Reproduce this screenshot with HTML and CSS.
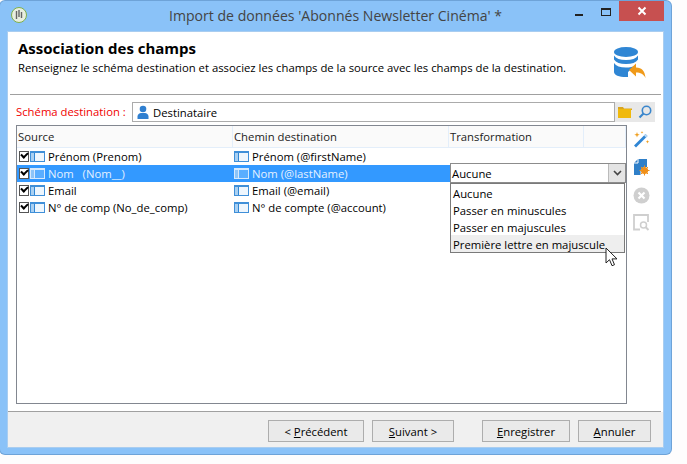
FILE: index.html

```html
<!DOCTYPE html>

<html>
    <head>
        <title>Import de données</title>
        <link rel="stylesheet" href="styles.css">
    </head>
    <body>
        <div class="window">
            <div class="titlebar">
                <svg class="app_icon" width="18" height="18" viewBox="0 0 18 18">
                    <circle cx="9" cy="9" r="7.500" fill="#e8eee0" stroke="#7fb04a" stroke-width="1"/>
                    <path d="M6.500 5v8M9 4v7M11.500 6v6" stroke="#666" stroke-width="1.400" fill="none"/>
                </svg>
                <div class="title_text">Import de données 'Abonnés Newsletter Cinéma' *</div>
                <div class="win_controls">
                    <div class="win_min"></div>
                    <div class="win_max"></div>
                    <div class="win_close">
                        <svg width="10" height="10" viewBox="0 0 10 10"><path d="M1.500 1.500l7 7M8.500 1.500l-7 7" stroke="#fff" stroke-width="2"/></svg>
                    </div>
                </div>
            </div>
            <div class="client">
                <div class="header">
                    <div class="header_text">
                        <h2>Association des champs</h2>
                        <p>Renseignez le schéma destination et associez les champs de la source avec les champs de la destination.</p>
                    </div>
                    <svg class="header_icon" width="34" height="34" viewBox="0 0 34 34">
                        <ellipse cx="13" cy="6" rx="12" ry="5" fill="#2f86d4"/>
                        <path d="M1 9.500c2 3 6 4.500 12 4.500s10-1.500 12-4.500v4c-2 3-6 4.500-12 4.500s-10-1.500-12-4.500z" fill="#2f86d4"/>
                        <path d="M1 17c2 3 6 4.500 12 4.500 4 0 7-.6 9-1.800l-7 6.300v5h-2c-7 0-12-2-12-5z" fill="#2f86d4"/>
                        <path d="M16 24l7-6.500v4c6 0 9 4 9.500 10.500-2-4-5-5.500-9.500-5.500v4z" fill="#f09a1a"/>
                    </svg>
                </div>
                <div class="body">
                    <div class="schema_row">
                        <label class="schema_label">Schéma destination :</label>
                        <div class="schema_input">
                            <svg class="user_icon" width="12" height="15" viewBox="0 0 12 15">
                                <circle cx="6" cy="4" r="3.300" fill="#2f7fd0"/>
                                <path d="M0.500 14v-2.500c0-2 2-3.500 3.500-3.500h4c1.500 0 3.500 1.500 3.500 3.500v2.500z" fill="#2f7fd0"/>
                            </svg>
                            <span>Destinataire</span>
                        </div>
                        <div class="schema_buttons">
                            <svg width="14" height="12" viewBox="0 0 14 12">
                                <path d="M0 1h5l1 1.500h8v1.500h-14z" fill="#d9a520"/>
                                <rect x="0" y="3" width="13" height="9" fill="#f0b90c"/>
                            </svg>
                            <svg width="14" height="14" viewBox="0 0 14 14">
                                <circle cx="8.500" cy="5.500" r="4.200" fill="none" stroke="#3a86cc" stroke-width="1.600"/>
                                <path d="M5.500 8.500l-4 4" stroke="#3a86cc" stroke-width="2.200"/>
                            </svg>
                        </div>
                    </div>
                    <div class="main_row">
                        <div class="grid">
                            <div class="grid_header">
                                <div class="head_cell">Source</div>
                                <div class="head_cell">Chemin destination</div>
                                <div class="head_cell">Transformation</div>
                                <div class="head_cell"></div>
                            </div>
                            <div class="grid_row">
                                <div class="cell"><span class="check"></span><span class="col_icon"></span>Prénom (Prenom)</div>
                                <div class="cell cell_dest"><span class="col_icon"></span>Prénom (@firstName)</div>
                            </div>
                            <div class="grid_row selected">
                                <div class="cell"><span class="check"></span><span class="col_icon"></span>Nom &nbsp; (Nom__)</div>
                                <div class="cell cell_dest"><span class="col_icon"></span>Nom (@lastName)</div>
                            </div>
                            <div class="grid_row">
                                <div class="cell"><span class="check"></span><span class="col_icon"></span>Email</div>
                                <div class="cell cell_dest"><span class="col_icon"></span>Email (@email)</div>
                            </div>
                            <div class="grid_row">
                                <div class="cell"><span class="check"></span><span class="col_icon"></span>N° de comp (No_de_comp)</div>
                                <div class="cell cell_dest"><span class="col_icon"></span>N° de compte (@account)</div>
                            </div>

                            <!-- open combo box, lies over the rows -->
                            <div class="combo">
                                <div class="combo_value">Aucune</div>
                                <div class="combo_arrow">
                                    <svg width="9" height="6" viewBox="0 0 9 6"><path d="M1 1l3.500 3.500L8 1" fill="none" stroke="#444" stroke-width="1.600"/></svg>
                                </div>
                            </div>
                            <div class="combo_list">
                                <div class="combo_item">Aucune</div>
                                <div class="combo_item">Passer en minuscules</div>
                                <div class="combo_item">Passer en majuscules</div>
                                <div class="combo_item combo_hover">Première lettre en majuscule</div>
                            </div>
                            <svg class="cursor" width="13" height="20" viewBox="0 0 13 20">
                                <path d="M1 1v15l3.500-3.300 2.500 6 2.500-1-2.500-5.800h5z" fill="#fff" stroke="#222" stroke-width="1"/>
                            </svg>
                        </div>
                        <div class="toolbar">
                            <svg width="17" height="17" viewBox="0 0 17 17">
                                <path d="M1 14.500L12.500 3l2 2L3 16.500z" fill="#2f86d4"/>
                                <path d="M11 4.500L12.500 3l2 2L13 6.500z" fill="#bcd9f2"/>
                                <path d="M4 1l.7 2 2 .7-2 .7-.7 2-.7-2-2-.7 2-.7zM14.500 9l.5 1.300 1.300.5-1.300.5-.5 1.300-.5-1.300-1.300-.5 1.300-.5zM9 0l.4 1 1 .4-1 .4-.4 1-.4-1-1-.4 1-.4z" fill="#f0a020"/>
                            </svg>
                            <svg width="17" height="17" viewBox="0 0 17 17">
                                <path d="M1 4l4-4h9v8h-3.500l-3 3v5h-6.500z" fill="#2f7fc8"/>
                                <path d="M5 0v4h-4" fill="none" stroke="#fff" stroke-width="1"/>
                                <circle cx="11.500" cy="11.500" r="3.600" fill="#f0901a"/>
                                <path d="M11.500 6.500v10M6.500 11.500h10M8 8l7 7M15 8l-7 7" stroke="#f0901a" stroke-width="1"/>
                            </svg>
                            <svg width="17" height="17" viewBox="0 0 17 17">
                                <circle cx="8.500" cy="8.500" r="8" fill="#cfcfcf"/>
                                <path d="M5.500 5.500l6 6M11.500 5.500l-6 6" stroke="#fff" stroke-width="2.200"/>
                            </svg>
                            <svg width="17" height="17" viewBox="0 0 17 17">
                                <path d="M7 15.500h-6v-14.500h14v7" fill="none" stroke="#cfcfcf" stroke-width="1.800"/>
                                <circle cx="10.500" cy="11" r="3" fill="none" stroke="#cfcfcf" stroke-width="1.500"/>
                                <path d="M12.500 13l3 3" stroke="#cfcfcf" stroke-width="2"/>
                            </svg>
                        </div>
                    </div>
                </div>
                <div class="footer">
                    <button class="btn btn_prev">&lt; <u>P</u>récédent</button>
                    <button class="btn btn_next"><u>S</u>uivant &gt;</button>
                    <button class="btn btn_save"><u>E</u>nregistrer</button>
                    <button class="btn btn_cancel"><u>A</u>nnuler</button>
                </div>
            </div>
        </div>
    </body>
</html>
```

FILE: styles.css

```css
html, body {
    margin: 0;      padding: 0;
    height: 100%;
    overflow: hidden;
    background-color: #fefdfd;
    color: #000;
    font-family: "Open Sans", sans-serif;
    font-size: 12px;
}

/* Window */
.window {
    box-sizing: border-box;
    width: 671px;   height: 453px;
    margin: 1px 0 0 0;
    padding: 0 8px 7px 8px;
    display: flex;
    flex-direction: column;
    background-color: #8ac2f8;
    border-radius: 5px;
    box-shadow: 0 0 0 1px #6ea3d8;
}

.titlebar {
    height: 31px;
    flex: none;
    display: flex;
    align-items: flex-start;
    position: relative;
}
.app_icon {
    margin: 5px 0 0 2px;
}
.title_text {
    position: absolute;
    left: 161px;    top: 5px;
    font-size: 14.08px;
    color: #444;
    white-space: nowrap;
}
.win_controls {
    margin-left: auto;
    margin-right: -1px;
    display: flex;
    align-items: flex-start;
}
.win_min {
    width: 8px;     height: 2px;
    margin: 13px 0 0 0;
    background-color: #222;
}
.win_max {
    width: 8px;     height: 5px;
    margin: 7px 8px 0 18px;
    border: solid 1px #222;
    border-top-width: 2px;
}
.win_close {
    width: 45px;    height: 20px;
    display: flex;
    align-items: center;
    justify-content: center;
    background-color: #c75050;
}

.client {
    flex: 1;
    display: flex;
    flex-direction: column;
    min-height: 0;
    background-color: #fff;
    box-shadow: 0 0 0 1px #a9cdf0;
}

/* Header */
.header {
    height: 62px;
    flex: none;
    margin: 0 2px;
    display: flex;
    justify-content: space-between;
    border-bottom: solid 1px #a0a0a0;
}
.header_text {
    padding: 6px 0 0 8px;
}
.header_text h2 {
    margin: 0;
    font-size: 15px;
    line-height: 20px;
    font-weight: bold;
}
.header_text p {
    margin: 2px 0 0 0;
    line-height: 16px;
    font-size: 11.3px;
}
.header_icon {
    margin: 14px 14px 0 0;
}

/* Body */
.body {
    flex: 1;
    min-height: 0;
    display: flex;
    flex-direction: column;
    padding: 7px 0 7px 8px;
    border-bottom: solid 1px #a0a0a0;
    margin: 0 2px 0 0;
}
.schema_row {
    height: 20px;
    flex: none;
    display: flex;
    align-items: stretch;
}
.schema_label {
    width: 116px;
    color: #f00000;
    line-height: 19px;
    white-space: nowrap;
    font-size: 11.3px;
}
.schema_input {
    flex: 1;
    box-sizing: border-box;
    display: flex;
    align-items: center;
    gap: 4px;
    padding-left: 4px;
    border: solid 1px #ababab;
    font-size: 11.3px;
}
.schema_buttons {
    width: 40px;
    margin-right: 6px;
    display: flex;
    align-items: center;
    justify-content: space-around;
    background-color: #e8e8e8;
}

.main_row {
    flex: 1;
    min-height: 0;
    margin-top: 3px;
    display: flex;
}

/* Grid */
.grid {
    box-sizing: border-box;
    width: 611px;
    position: relative;
    border: solid 1px #828790;
    font-size: 11.3px;
}
.grid_header {
    height: 21px;
    display: grid;
    grid-template-columns: 216px 216px 135px 1fr;
    background-color: #fafafa;
    border-bottom: solid 1px #e3eefa;
}
.head_cell {
    box-sizing: border-box;
    padding-left: 1px;
    line-height: 20px;
    padding-top: 1px;
    border-right: solid 1px #e3eefa;
    color: #222;
}
.grid_row {
    height: 17px;
    display: grid;
    grid-template-columns: 216px 216px;
    line-height: 17px;
}
.grid_row.selected {
    background-color: #3399ff;
    color: #e4f1ff;
}
.cell {
    display: flex;
    align-items: center;
    white-space: pre;
}
.cell_dest {
    padding-left: 1px;
}
.check {
    box-sizing: border-box;
    width: 10px;    height: 11px;
    margin: 0 1px 0 2px;
    background-color: #fff;
    border: solid 1px #555;
    position: relative;
}
.check:after {
    content: "";
    position: absolute;
    left: 1px;      top: 0px;
    width: 5px;     height: 3px;
    border-left: solid 2px #000;
    border-bottom: solid 2px #000;
    transform: rotate(-45deg);
}
.col_icon {
    box-sizing: border-box;
    width: 15px;    height: 11px;
    margin-right: 3px;
    background: linear-gradient(to right, #a9d0f2 0 3px, #2f86d4 3px 4px, #eef6fd 4px);
    border: solid 1px #3f8fd8;
    border-top-width: 2px;
}
.selected .col_icon {
    background: linear-gradient(to right, #8cc4f8 0 3px, #d5e9fd 3px 4px, #5aaeff 4px);
    border-color: #d5e9fd;
}

/* Combo box */
.combo {
    box-sizing: border-box;
    position: absolute;
    left: 433px;    top: 37px;
    width: 176px;   height: 20px;
    display: flex;
    background-color: #fff;
    border: solid 1px #8c8c8c;
    line-height: 20px;
}
.combo_value {
    flex: 1;
    padding-left: 1px;
}
.combo_arrow {
    width: 16px;
    display: flex;
    align-items: center;
    justify-content: center;
    background-color: #e4e4e4;
    border-left: solid 1px #bbb;
}
.combo_list {
    box-sizing: border-box;
    position: absolute;
    left: 433px;    top: 57px;
    width: 175px;
    background-color: #fff;
    border: solid 1px #7a7a7a;
}
.combo_item {
    height: 17px;
    line-height: 19px;
    padding-left: 2px;
}
.combo_hover {
    background-color: #eeeeee;
}
.cursor {
    position: absolute;
    left: 588px;    top: 121px;
}

/* Toolbar */
.toolbar {
    flex: none;
    position: relative;
    width: 30px;
}
.toolbar svg {
    position: absolute;
    left: 6px;
}
.toolbar svg:nth-child(1) { top: 6px; }
.toolbar svg:nth-child(2) { top: 34px; }
.toolbar svg:nth-child(3) { top: 62px; }
.toolbar svg:nth-child(4) { top: 89px; }

/* Footer */
.footer {
    height: 35px;
    flex: none;
    display: flex;
    align-items: flex-start;
    padding-top: 8px;
    box-sizing: border-box;
    background-color: #f0f0f0;
}
.btn {
    box-sizing: border-box;
    height: 22px;
    padding: 0;
    font-family: "Open Sans", sans-serif;
    font-size: 11.3px;
    color: #000;
    background-color: #eaeaea;
    border: solid 1px #adadad;
}
.btn_prev   { width: 96px; margin-left: 260px; }
.btn_next   { width: 82px; margin-left: 8px; }
.btn_save   { width: 88px; margin-left: 28px; }
.btn_cancel { width: 73px; margin-left: 8px; }
```
